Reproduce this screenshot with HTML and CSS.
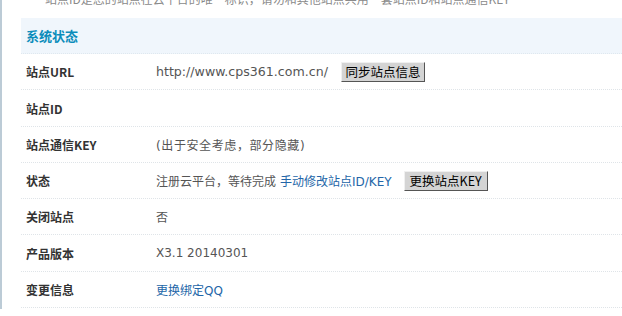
FILE: index.html
```html
<!DOCTYPE html>
<html>
<head>
<meta charset="utf-8">
<link rel="stylesheet" href="styles.css">
</head>
<body>
<div class="frame">
  <div class="tip">站点ID是您的站点在云平台的唯一标识，请勿和其他站点共用一套站点ID和站点通信KEY</div>
  <div class="panel">
    <div class="head">系统状态</div>
    <div class="row"><div class="label">站点URL</div><div class="value"><span class="wide">http://www.cps361.com.cn/</span><button class="btn btn1">同步站点信息</button></div></div>
    <div class="row tall"><div class="label">站点ID</div><div class="value"></div></div>
    <div class="row"><div class="label">站点通信KEY</div><div class="value"><span class="spaced">(出于安全考虑，部分隐藏)</span></div></div>
    <div class="row"><div class="label">状态</div><div class="value">注册云平台，等待完成<a class="link link-gap" href="#">手动修改站点ID/KEY</a><button class="btn btn2">更换站点KEY</button></div></div>
    <div class="row"><div class="label">关闭站点</div><div class="value">否</div></div>
    <div class="row tall"><div class="label">产品版本</div><div class="value">X3.1 20140301</div></div>
    <div class="row"><div class="label">变更信息</div><div class="value"><a class="link" href="#">更换绑定QQ</a></div></div>
    <div class="foot"></div>
  </div>
</div>
</body>
</html>
```
FILE: styles.css
```css
html, body {
  margin: 0;
  padding: 0;
  background: #fff;
  overflow: hidden;
}
body {
  font-family: "DejaVu Sans", "Noto Sans CJK SC", sans-serif;
  font-size: 12px;
  color: #333;
}
.frame {
  border-left: 2px solid #bccbd6;
  padding-left: 19px;
  height: 316px;
  box-sizing: border-box;
}
.tip {
  margin-top: -7px;
  padding-left: 24px;
  line-height: 12px;
  height: 12px;
  color: #8a8a8a;
  white-space: nowrap;
  font-family: "Noto Sans CJK SC", sans-serif;
}
.panel {
  margin-top: 13px;
}
.head {
  height: 35px;
  line-height: 35px;
  background: #f0f6fc;
  border-bottom: 1px dotted #dfe8ef;
  padding-left: 5px;
  color: #0c8dbb;
  font-weight: 700;
  font-size: 13px;
  font-family: "Noto Sans CJK SC", sans-serif;
}
.row {
  height: 35px;
  border-bottom: 1px dotted #dfe4e8;
  display: flex;
  align-items: center;
}
.row.tall {
  height: 36px;
}
.label {
  width: 135px;
  flex: none;
  padding-left: 5px;
  box-sizing: border-box;
  font-weight: 700;
  color: #333;
  font-family: "Noto Sans CJK SC", sans-serif;
}
.value {
  color: #555;
  font-size: 12px;
  white-space: nowrap;
  display: flex;
  align-items: center;
}
.wide {
  font-size: 12.6px;
}
.spaced {
  letter-spacing: 0.6px;
}
.link {
  color: #2366a8;
  text-decoration: none;
}
.link-gap {
  margin-left: 4px;
}
.btn {
  height: 20px;
  width: 84px;
  padding: 0;
  background: #d4d4d4;
  border: 1px solid;
  border-color: #f0f0f0 #555 #555 #f0f0f0;
  font-family: "Noto Sans CJK SC", sans-serif;
  font-size: 12.5px;
  color: #000;
  line-height: 18px;
  border-radius: 0;
}
.btn1 { margin-left: 13px; }
.btn2 { margin-left: 12px; }
.foot {
  height: 12px;
  margin-top: 1px;
  background: #f0f6fc;
}
```
